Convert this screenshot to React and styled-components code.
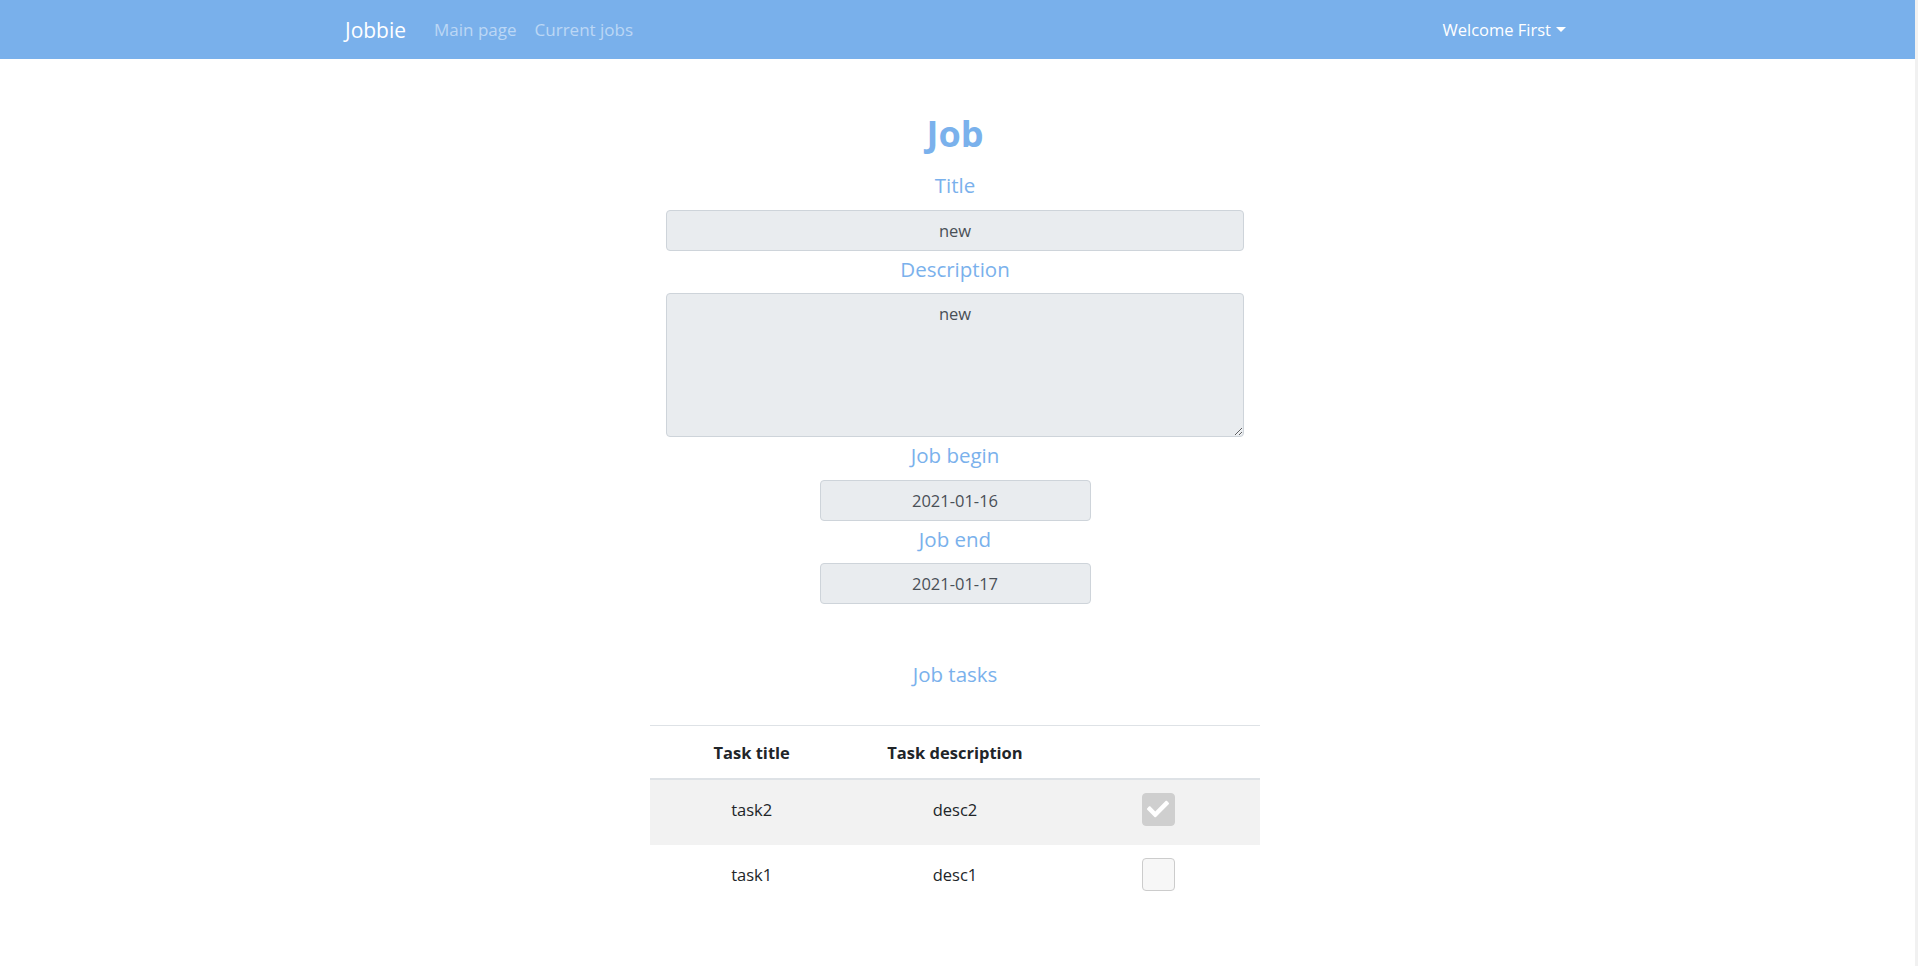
import React from 'react';
import styled, { createGlobalStyle } from 'styled-components';

const GlobalStyle = createGlobalStyle`
  html {
    background: #f1f1f1;
  }
  body {
    margin: 0;
    font-family: "Open Sans", "Noto Sans", sans-serif;
    color: #212529;
  }
`

const tasks = [
  { id: 2, title: 'task2', description: 'desc2', done: true },
  { id: 1, title: 'task1', description: 'desc1', done: false },
];

function CheckMark() {
  return (
    <svg width="22" height="22" viewBox="0 0 512 512" fill="#ffffff">
      <path d="M173.9 439.4l-166.4-166.4c-10-10-10-26.2 0-36.2l36.2-36.2c10-10 26.2-10 36.2 0L192 312.7 432.1 72.6c10-10 26.2-10 36.2 0l36.2 36.2c10 10 10 26.2 0 36.2l-294.4 294.4c-10 10-26.2 10-36.2 0z" />
    </svg>
  );
}

function App() {
  return <Page>
      <GlobalStyle />
      <Navbar>
        <NavInner>
          <Brand>Jobbie</Brand>
          <NavLink>Main page</NavLink>
          <NavLink>Current jobs</NavLink>
          <Spacer />
          <UserToggle>
            Welcome First
            <Caret />
          </UserToggle>
        </NavInner>
      </Navbar>
      <Main>
        <Heading>Job</Heading>
        <Label>Title</Label>
        <Input type="text" value="new" readOnly />
        <Label>Description</Label>
        <TextArea value="new" readOnly />
        <Label>Job begin</Label>
        <Input type="text" value="2021-01-16" readOnly narrow />
        <Label>Job end</Label>
        <Input type="text" value="2021-01-17" readOnly narrow />
        <Label spaced>Job tasks</Label>
        <Table>
          <thead>
            <tr>
              <Th>Task title</Th>
              <Th>Task description</Th>
              <Th></Th>
            </tr>
          </thead>
          <tbody>
            {tasks.map((task, i) => (
              <Row key={task.id} striped={i % 2 === 0}>
                <Td>{task.title}</Td>
                <Td>{task.description}</Td>
                <Td>
                  <CheckBox checked={task.done}>
                    {task.done && <CheckMark />}
                  </CheckBox>
                </Td>
              </Row>
            ))}
          </tbody>
        </Table>
      </Main>
  </Page>;
}

export default App;

const Page = styled.div`
  margin-right: 3px;
  min-height: 100vh;
  background: #ffffff;
`
const Navbar = styled.nav`
  background: #79b0eb;
  height: 59px;
  display: flex;
  align-items: center;
`
const NavInner = styled.div`
  width: 1225px;
  margin: 0 auto;
  display: flex;
  align-items: center;
`
const Brand = styled.a`
  color: #ffffff;
  font-size: 21px;
  margin-right: 19px;
  cursor: pointer;
`
const NavLink = styled.a`
  color: rgba(255, 255, 255, 0.5);
  font-size: 17px;
  padding: 0 9px;
  cursor: pointer;
`
const Spacer = styled.div`
  flex: 1;
`
const UserToggle = styled.a`
  color: #ffffff;
  font-size: 16.5px;
  display: flex;
  align-items: center;
  padding-right: 4px;
  cursor: pointer;
`
const Caret = styled.span`
  width: 0;
  height: 0;
  margin-left: 5px;
  border-left: 5px solid transparent;
  border-right: 5px solid transparent;
  border-top: 5px solid #ffffff;
`
const Main = styled.main`
  display: flex;
  flex-direction: column;
  align-items: center;
  padding: 53px 5px 60px 0;
`
const Heading = styled.h1`
  margin: 0 0 12px;
  font-size: 36px;
  line-height: 1.2;
  font-weight: 700;
  color: #7ab1ec;
`
const Label = styled.h4`
  margin: ${props => props.spaced ? '55px 0 36px' : '3px 0 9.5px'};
  font-size: 20.5px;
  line-height: 30px;
  font-weight: 400;
  color: #7ab1ec;
`
const Input = styled.input`
  box-sizing: border-box;
  width: ${props => props.narrow ? '271px' : '578px'};
  height: 41px;
  padding: 0 12px;
  font-family: inherit;
  font-size: 16.5px;
  color: #495057;
  text-align: center;
  background: #e9ecef;
  border: 1px solid #ced4da;
  border-radius: 4px;
  outline: none;
`
const TextArea = styled.textarea`
  box-sizing: border-box;
  width: 578px;
  height: 144px;
  padding: 8px 12px;
  font-family: inherit;
  font-size: 16.5px;
  line-height: 1.5;
  color: #495057;
  text-align: center;
  background: #e9ecef;
  border: 1px solid #ced4da;
  border-radius: 4px;
  outline: none;
`
const Table = styled.table`
  width: 610px;
  border-collapse: collapse;
  table-layout: fixed;
  font-size: 16.5px;
`
const Th = styled.th`
  height: 52px;
  padding: 0 12px;
  font-weight: 700;
  text-align: center;
  vertical-align: middle;
  border-top: 1px solid #dee2e6;
  border-bottom: 2px solid #dee2e6;
`
const Row = styled.tr`
  background: ${props => props.striped ? '#f2f2f2' : 'transparent'};
  & + & td {
    border-top: 1px solid #dee2e6;
  }
`
const Td = styled.td`
  height: 66px;
  padding: 0 12px 7px;
  text-align: center;
  vertical-align: middle;
  box-sizing: border-box;
`
const CheckBox = styled.span`
  box-sizing: border-box;
  width: 33px;
  height: 33px;
  display: inline-flex;
  align-items: center;
  justify-content: center;
  vertical-align: middle;
  border-radius: 4px;
  background: ${props => props.checked ? '#cfcfcf' : '#f7f7f7'};
  border: 1px solid ${props => props.checked ? '#cfcfcf' : '#cccccc'};
`
